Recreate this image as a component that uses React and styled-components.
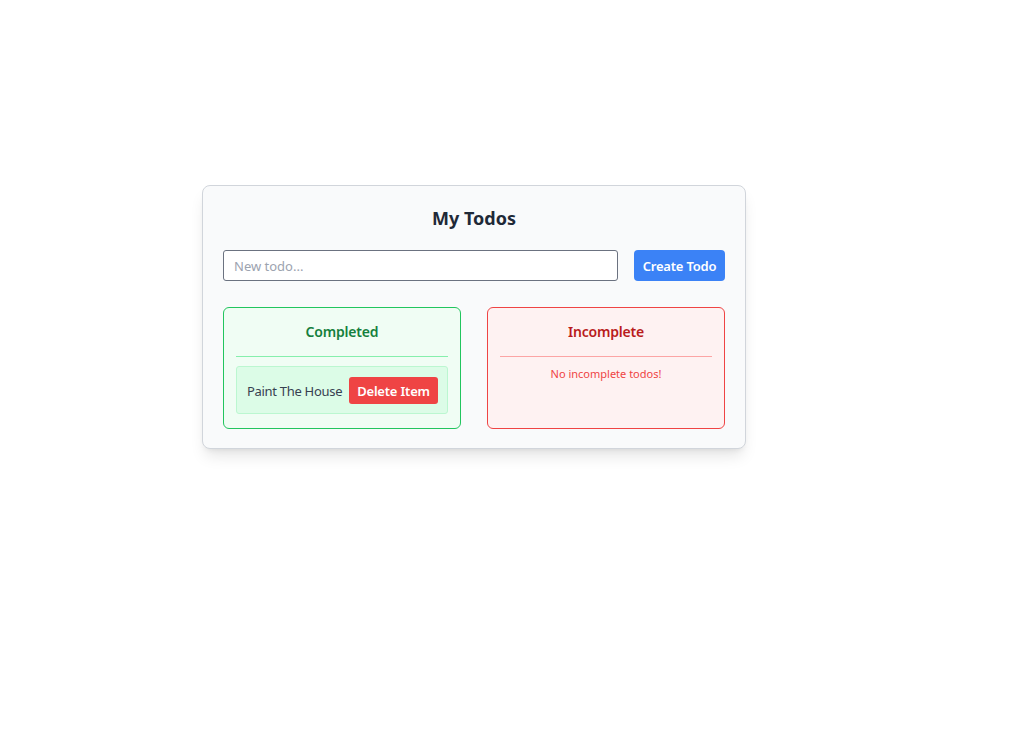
import React, { useState } from 'react';
import styled, { createGlobalStyle, css } from 'styled-components';

const GlobalStyle = createGlobalStyle`
  html, body {
    margin: 0;
    padding: 0;
    background: #ffffff;
    font-family: "Noto Sans", "Open Sans", Arial, sans-serif;
  }
  * { box-sizing: border-box; }
`;

const Page = styled.div`
  min-height: 733px;
  padding: 185px 0 0 202px;
`;

const Card = styled.div`
  width: 544px;
  background: #f9fafb;
  border: 1px solid #d1d5db;
  border-radius: 8px;
  box-shadow: 0 10px 15px -3px rgba(0, 0, 0, 0.1), 0 4px 6px -4px rgba(0, 0, 0, 0.1);
  padding: 20px 20px 19px;
`;

const Title = styled.h1`
  margin: 0 0 20px;
  font-size: 18px;
  line-height: 24px;
  font-weight: 700;
  text-align: center;
  color: #1f2937;
`;

const Form = styled.form`
  display: flex;
  gap: 16px;
  margin-bottom: 26px;
`;

const Input = styled.input`
  flex: 1;
  height: 31px;
  border: 1px solid #6b7280;
  border-radius: 3px;
  background: #ffffff;
  padding: 0 10px;
  font: inherit;
  font-size: 13px;
  color: #374151;
  outline: none;
  &::placeholder { color: #9ca3af; }
`;

const Button = styled.button`
  flex-shrink: 0;
  border: none;
  color: #ffffff;
  font: inherit;
  font-size: 13px;
  font-weight: 600;
  letter-spacing: -0.2px;
  cursor: pointer;
  white-space: nowrap;
  ${p => p.variant === 'danger' ? css`
    background: #ef4444;
    height: 27px;
    width: 89px;
    padding: 0;
    border-radius: 3px;
  ` : css`
    background: #3b82f6;
    height: 31px;
    width: 91px;
    padding: 0;
    border-radius: 4px;
  `}
`;

const Columns = styled.div`
  display: grid;
  grid-template-columns: 1fr 1fr;
  gap: 26px;
`;

const palettes = {
  green: { border: '#22c55e', bg: '#f0fdf4', head: '#15803d', line: '#86efac', text: '#16a34a' },
  red: { border: '#ef4444', bg: '#fef2f2', head: '#b91c1c', line: '#fca5a5', text: '#ef4444' }
};

const Column = styled.section`
  border: 1px solid ${p => palettes[p.tone].border};
  background: ${p => palettes[p.tone].bg};
  border-radius: 6px;
  padding: 12px 12px 14px;
  min-height: 122px;
`;

const ColumnHead = styled.h2`
  margin: 0 0 9px;
  padding-bottom: 12px;
  border-bottom: 1px solid ${p => palettes[p.tone].line};
  font-size: 14px;
  line-height: 24px;
  font-weight: 600;
  letter-spacing: -0.2px;
  text-align: center;
  color: ${p => palettes[p.tone].head};
`;

const Empty = styled.p`
  margin: 0;
  font-size: 11px;
  line-height: 16px;
  text-align: center;
  color: ${p => palettes[p.tone].text};
`;

const Item = styled.div`
  display: flex;
  align-items: center;
  justify-content: space-between;
  gap: 6px;
  height: 48px;
  padding: 1px 9px 0 10px;
  background: #dcfce7;
  border: 1px solid #bbf7d0;
  border-radius: 3px;
  font-size: 13px;
  letter-spacing: -0.3px;
  color: #374151;
  white-space: nowrap;
`;

export default function App() {
  const [todos, setTodos] = useState([{ id: 1, text: 'Paint The House', done: true }]);
  const [draft, setDraft] = useState('');

  const done = todos.filter(t => t.done);
  const open = todos.filter(t => !t.done);

  const add = e => {
    e.preventDefault();
    if (!draft.trim()) return;
    setTodos([...todos, { id: Date.now(), text: draft.trim(), done: false }]);
    setDraft('');
  };

  const remove = id => setTodos(todos.filter(t => t.id !== id));

  return (
    <Page>
      <GlobalStyle />
      <Card>
        <Title>My Todos</Title>
        <Form onSubmit={add}>
          <Input placeholder="New todo..." value={draft} onChange={e => setDraft(e.target.value)} />
          <Button type="submit">Create Todo</Button>
        </Form>
        <Columns>
          <Column tone="green">
            <ColumnHead tone="green">Completed</ColumnHead>
            {done.length ? done.map(t => (
              <Item key={t.id}>
                <span>{t.text}</span>
                <Button type="button" variant="danger" onClick={() => remove(t.id)}>Delete Item</Button>
              </Item>
            )) : <Empty tone="green">No completed todos!</Empty>}
          </Column>
          <Column tone="red">
            <ColumnHead tone="red">Incomplete</ColumnHead>
            {open.length ? open.map(t => (
              <Item key={t.id}><span>{t.text}</span></Item>
            )) : <Empty tone="red">No incomplete todos!</Empty>}
          </Column>
        </Columns>
      </Card>
    </Page>
  );
}
